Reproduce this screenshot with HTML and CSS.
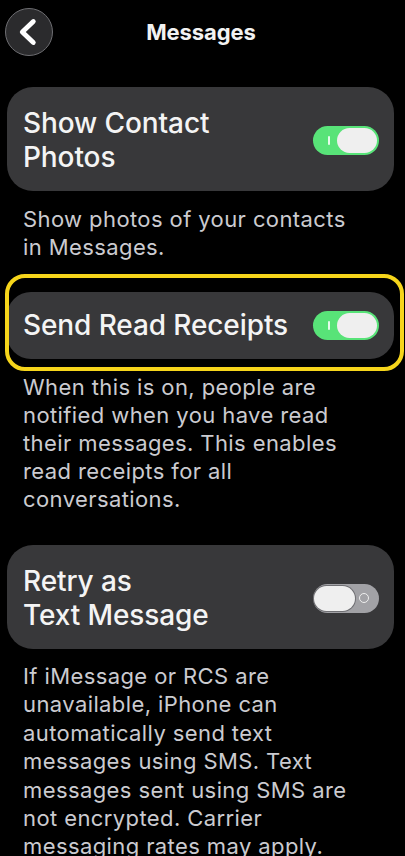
FILE: index.html
```html
<!DOCTYPE html>
<html lang="en">
<head>
<meta charset="utf-8">
<meta name="viewport" content="width=device-width, initial-scale=1">
<title>Messages</title>
<link rel="stylesheet" href="styles.css">
</head>
<body>
  <header class="nav">
    <button class="back" aria-label="Back">
      <svg width="48" height="48" viewBox="0 0 48 48" aria-hidden="true">
        <path d="M28.5 16.5 L17 27.5 L28.5 38.5" fill="none" stroke="#fff" stroke-width="5" stroke-linecap="round" stroke-linejoin="round" transform="translate(0,-3.5)"/>
      </svg>
    </button>
    <h1 class="nav-title">Messages</h1>
    <span class="nav-spacer"></span>
  </header>

  <main class="list">
    <section class="group">
      <div class="card card-tall">
        <span class="card-title">Show Contact<br>Photos</span>
        <span class="toggle on"><span class="mark"></span><span class="knob"></span></span>
      </div>
      <p class="note">Show photos of your contacts<br>in Messages.</p>
    </section>

    <section class="group">
      <div class="highlight">
        <div class="card card-single">
          <span class="card-title">Send Read Receipts</span>
          <span class="toggle on"><span class="mark"></span><span class="knob"></span></span>
        </div>
      </div>
      <p class="note">When this is on, people are<br>notified when you have read<br>their messages. This enables<br>read receipts for all<br>conversations.</p>
    </section>

    <section class="group">
      <div class="card card-tall">
        <span class="card-title">Retry as<br>Text Message</span>
        <span class="toggle off"><span class="knob"></span><span class="ring"></span></span>
      </div>
      <p class="note note-long">If iMessage or RCS are<br>unavailable, iPhone can<br>automatically send text<br>messages using SMS. Text<br>messages sent using SMS are<br>not encrypted. Carrier<br>messaging rates may apply.</p>
    </section>
  </main>
</body>
</html>
```

FILE: styles.css
```css
* {
  box-sizing: border-box;
}

html, body {
  margin: 0;
  background: #000;
}

body {
  font-family: Inter, "Noto Sans", "Liberation Sans", sans-serif;
  color: #fff;
  overflow: hidden;
  height: 856px;
}

/* top navigation */
.nav {
  display: grid;
  grid-template-columns: 1fr auto 1fr;
  align-items: center;
  padding: 8px 0 0 5px;
  height: 56px;
}

.back {
  width: 48px;
  height: 48px;
  padding: 0;
  border-radius: 50%;
  background: #2b2b2d;
  border: 1px solid #6e6e72;
  display: flex;
  align-items: center;
  justify-content: center;
  justify-self: start;
}

.back svg {
  display: block;
}

.nav-title {
  margin: 0;
  font-size: 22px;
  font-weight: 700;
  letter-spacing: -0.1px;
  color: #f2f2f2;
  transform: translateX(-4px);
}

/* settings list */
.list {
  padding: 0 11px 0 7px;
}

.group {
  margin-top: 31px;
}

.group:last-child {
  margin-top: 32px;
}

.card {
  display: flex;
  align-items: center;
  justify-content: space-between;
  background: #38383a;
  border-radius: 26px;
  padding: 0 15px 0 16px;
}

.card-tall {
  padding-top: 19px;
  padding-bottom: 17px;
}

.card-single {
  padding-top: 16px;
  padding-bottom: 17px;
  border-radius: 24px;
}

.card-title {
  font-size: 28px;
  line-height: 34px;
  font-weight: 500;
  letter-spacing: -0.1px;
  color: #f4f4f4;
}

.note {
  margin: 14px 0 0;
  padding-left: 16px;
  font-size: 22px;
  line-height: 28px;
  font-weight: 400;
  letter-spacing: 0.4px;
  color: #cbcbd0;
}

.note-long {
  margin-top: 13px;
  line-height: 28.4px;
}

/* focus ring drawn around the second row */
.highlight {
  position: relative;
}

.highlight::after {
  content: "";
  position: absolute;
  left: -2px;
  right: -10px;
  top: -18px;
  bottom: -12px;
  border: 4px solid #f6d51b;
  border-radius: 20px;
  pointer-events: none;
}

/* switches */
.toggle {
  position: relative;
  flex: none;
  width: 66px;
  height: 29px;
  border-radius: 15px;
}

.toggle.on {
  background: #58e378;
}

.toggle.off {
  background: #a2a2a6;
}

.knob {
  position: absolute;
  top: 2px;
  width: 40px;
  height: 25px;
  border-radius: 13px;
  background: #efefef;
}

.toggle.on .knob {
  right: 2px;
}

.toggle.off .knob {
  left: 1px;
  width: 41px;
  box-shadow: 0 0 0 1px rgba(60, 60, 64, 0.5);
}

.mark {
  position: absolute;
  left: 15px;
  top: 10px;
  width: 1.5px;
  height: 9px;
  background: rgba(255, 255, 255, 0.85);
  border-radius: 1px;
}

.ring {
  position: absolute;
  right: 10px;
  top: 9.5px;
  width: 10px;
  height: 10px;
  border: 1.5px solid #efefef;
  border-radius: 50%;
}
```
